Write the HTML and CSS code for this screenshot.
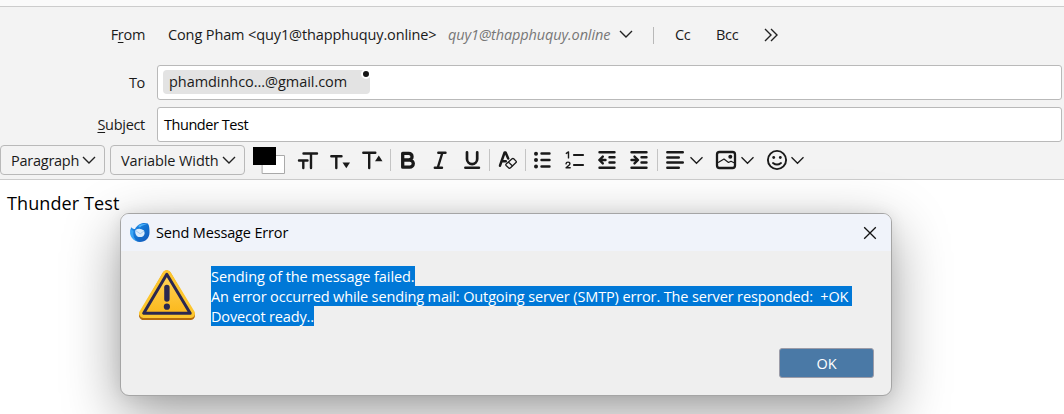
FILE: index.html
```
<!DOCTYPE html>
<html lang="en">
<head>
<meta charset="utf-8">
<title>Write: Thunder Test</title>
<link rel="stylesheet" href="styles.css">
</head>
<body>
<header class="headers">
  <div class="row from-row">
    <label class="label">F<u>r</u>om</label>
    <span class="identity">Cong Pham &lt;quy1@thapphuquy.online&gt;</span>
    <em class="account">quy1@thapphuquy.online</em>
    <svg class="chev" viewBox="0 0 14 9"><path d="M1 1l6 6 6-6"/></svg>
    <span class="divider"></span>
    <span class="cc">Cc</span>
    <span class="bcc">Bcc</span>
    <svg class="more" viewBox="0 0 14 14"><path d="M1 1l6 6-6 6M7 1l6 6-6 6"/></svg>
  </div>
  <div class="row to-row">
    <label class="label">To</label>
    <div class="field"><span class="pill"><span class="address">phamdinhco...@gmail.com</span><i class="dot"></i></span></div>
  </div>
  <div class="row subject-row">
    <label class="label"><u>S</u>ubject</label>
    <div class="field"><span class="subject">Thunder Test</span></div>
  </div>
</header>
<nav class="toolbar">
  <div class="select paragraph"><span>Paragraph</span><svg class="chev" viewBox="0 0 14 9"><path d="M1 1l6 6 6-6"/></svg></div>
  <div class="select width"><span>Variable Width</span><svg class="chev" viewBox="0 0 14 9"><path d="M1 1l6 6 6-6"/></svg></div>
  <svg class="icon" width="45" height="32" viewBox="250 144 45 32"><path d="M262.5 155.500h22v18h-22z" fill="#fff" stroke="#aaa" stroke-width="1"/><path d="M253 147h23v18h-23z" fill="#000" stroke="none"/></svg>
  <svg class="icon" width="30" height="32" viewBox="295 144 30 32"><path d="M303.500 153.500h13.500M311 153.500v14.500M299 160.500h8.500M303.300 160.500v7.500"/></svg>
  <svg class="icon" width="30" height="32" viewBox="325 144 30 32"><path d="M331.300 156.300h10.200M336.300 156.300v11.700"/><path class="solid" d="M342.500 162.500h7.500l-3.700 5.700z"/></svg>
  <svg class="icon" width="35" height="32" viewBox="355 144 35 32"><path d="M363.300 152.800h12M369.200 152.800v15.200"/><path class="solid" d="M375 161.200h7.500l-3.700-5.700z"/></svg>
  <svg class="icon" width="35" height="32" viewBox="390 144 35 32"><path class="sep" d="M390.500 149v22"/><path d="M402.700 153.300h6a3.300 3.300 0 0 1 0 6.700h-6zM402.700 160h7a3.600 3.600 0 0 1 0 7.200h-7z" stroke-width="3.300"/></svg>
  <svg class="icon" width="32" height="32" viewBox="425 144 32 32"><path d="M438.300 152.700h7.200M434.800 167.700h7.200M442.300 153l-4.500 14.500"/></svg>
  <svg class="icon" width="32" height="32" viewBox="457 144 32 32"><path d="M467 152.300v6.700a5.100 5.100 0 0 0 10.200 0v-6.700" stroke-width="2.700"/><path d="M465.300 167.700h13.700"/></svg>
  <svg class="icon" width="36" height="32" viewBox="489 144 36 32"><path class="sep" d="M489.500 149v22"/><path d="M500 165.700l4.600-13.200h1l2.600 6M501.800 161.200h4" stroke-width="2.500"/><path d="M506.100 164.100l6-5.300q.8-.7 1.600 0l2.300 2.300q.7.800 0 1.500l-5.700 5.300q-.7.700-1.500 0l-2.700-2.400q-.7-.7 0-1.400zM508.300 162l4.200 4" stroke-width="1.300"/></svg>
  <svg class="icon" width="33" height="32" viewBox="525 144 33 32"><path class="sep" d="M525.500 149v22"/><path d="M541.500 153.500h8M541.500 160h8M541.500 166.500h8"/><circle class="solid" cx="536" cy="153.800" r="2"/><circle class="solid" cx="536" cy="160.100" r="2"/><circle class="solid" cx="536" cy="166.400" r="2"/></svg>
  <svg class="icon" width="34" height="32" viewBox="558 144 34 32"><path d="M574 155h9M574 165h9" stroke-width="2.200"/><path d="M566.300 153.400l2.200-1.500v6M566 163.800q.2-1.700 2-1.700 1.900 0 1.900 1.600 0 1-1.500 2.100l-2.300 2h4.100" stroke-width="1.400"/></svg>
  <svg class="icon" width="32" height="32" viewBox="592 144 32 32"><path d="M599.500 152.300h15M599.500 167.800h15M609.500 157.300h5M609.500 162.500h5M600 160h5.500M602.800 156.600l-3.500 3.400 3.500 3.400"/></svg>
  <svg class="icon" width="33" height="32" viewBox="624 144 33 32"><path d="M631.500 152.300h15M631.500 167.800h15M641.500 157.300h5M641.500 162.500h5M631.500 160h5.500M634.500 156.600l3.500 3.400-3.500 3.400"/></svg>
  <svg class="icon" width="53" height="32" viewBox="657 144 53 32"><path class="sep" d="M657.500 149v22"/><path d="M667.300 152.300h15.500M667.300 157.500h11.500M667.300 162.500h15.500M667.300 167.700h11.500"/><path class="thin" d="M690.500 157.300l6 6 6-6"/></svg>
  <svg class="icon" width="50" height="32" viewBox="710 144 50 32"><rect x="717" y="152" width="18" height="16" rx="2.500" stroke-width="2.300"/><circle class="solid" cx="730.300" cy="156.700" r="2"/><path d="M717 162.500l2-.4 5-3.100 4.500 3.500 2.500-1.300 3.500 1.800" stroke-width="1.200"/><path class="thin" d="M741.500 157.300l6 6 6-6"/></svg>
  <svg class="icon" width="50" height="32" viewBox="760 144 50 32"><circle cx="777" cy="160" r="9.100" stroke-width="1.900"/><circle class="solid" cx="773.700" cy="157.500" r="1.400"/><circle class="solid" cx="780.300" cy="157.500" r="1.400"/><path d="M773 163q4 3.200 8 0" stroke-width="1.900"/><path class="thin" d="M791.500 157.300l6 6 6-6"/></svg>
</nav>
<main class="editor"><p class="body-text">Thunder Test</p></main>

<section class="dialog" role="dialog">
  <div class="titlebar">
    <svg class="logo" width="22" height="22" viewBox="0 0 22 22">
      <defs>
        <linearGradient id="bird" x1="0" y1="0" x2="1" y2="1"><stop offset="0" stop-color="#2a93ee"/><stop offset=".55" stop-color="#1170cf"/><stop offset="1" stop-color="#1456b8"/></linearGradient>
      </defs>
      <path d="M2 5q-1 6 1 10c2 3.600 5 5 8 5 5.500 0 9.500-4 9.500-9.500 0-3 0-7-1.700-9-2.500-.8-5.500-.9-8.300.8C8.300 3.800 7 5 6 7 4.500 7 3 6.500 2 5z" fill="url(#bird)"/>
      <path d="M1.500 7Q0 12 3 16q2 3 6 3.800Q3 16 4.500 9z" fill="#3aa5f5"/>
      <path d="M9 4q4-3 9-1.700Q13 3 11 5.600z" fill="#4fb5fa"/>
      <path d="M6.500 8Q10.500 5.500 15 8.400q1.500 3.400-.8 5.800-3.200 1.800-6.200 0-2.500-2.700-1.500-6.200z" fill="#dcecfb"/>
      <path d="M6.700 8.600l4.500 3.200 3.800-2.800" fill="none" stroke="#9cc4ec" stroke-width=".9"/>
    </svg>
    <span class="title">Send Message Error</span>
    <svg class="close" width="14" height="14" viewBox="0 0 14 14"><path d="M1.200 1.200l11.600 11.600M12.800 1.200L1.200 12.800"/></svg>
  </div>
  <div class="content">
    <svg class="warning" width="58" height="52" viewBox="138 269 58 52">
      <defs><linearGradient id="amber" x1="0" y1="0" x2="0" y2="1"><stop offset="0" stop-color="#ffd45a"/><stop offset="1" stop-color="#fbb81c"/></linearGradient></defs>
      <path d="M166.800 275L143.500 315.500H190.500z" fill="#b56a0c" stroke="#b56a0c" stroke-width="9" stroke-linejoin="round"/>
      <path d="M166.800 274.500L143.500 313.500H190.500z" fill="#fdc62e" stroke="#fdc62e" stroke-width="9" stroke-linejoin="round"/>
      <path d="M166.800 274.300L143.700 313.200H190.200z" fill="url(#amber)" stroke="#2b2850" stroke-width="3" stroke-linejoin="round"/>
      <path d="M166.900 287.500v11.500" stroke="#2b2850" stroke-width="5.400" stroke-linecap="round"/>
      <circle cx="166.900" cy="306.700" r="3.100" fill="#2b2850"/>
    </svg>
    <div class="message">
      <div><span class="sel line1">Sending of the message failed.</span></div>
      <div><span class="sel line2">An error occurred while sending mail: Outgoing server (SMTP) error. The server responded:&nbsp; +OK&nbsp;</span></div>
      <div><span class="sel line3">Dovecot ready..</span></div>
    </div>
  </div>
  <div class="actions"><button class="ok">OK</button></div>
</section>
</body>
</html>
```
FILE: styles.css
```
* { box-sizing: border-box; }
body {
  margin: 0;
  width: 1064px;
  height: 414px;
  overflow: hidden;
  position: relative;
  background: #fff;
  color: #1a1a1a;
  font: 14.5px/20px "Open Sans", "Noto Sans", sans-serif;
  letter-spacing: -0.3px;
  border-top: 6px solid #fafafa;
}
svg { display: block; flex: none; fill: none; }
u { text-decoration-thickness: 1px; text-underline-offset: 2px; }
.headers { height: 137px; padding-top: 14px; background: #f3f3f3; border-top: 1px solid #ccc; }
.row { display: flex; align-items: center; white-space: nowrap; }
.label { width: 145px; text-align: right; flex: none; }
.from-row { height: 28px; margin-bottom: 16px; }
.identity { margin-left: 23px; width: 280px; letter-spacing: -0.12px; }
.account { width: 171px; color: #777; letter-spacing: -0.12px; }
.chev { width: 14px; height: 9px; stroke: #222; stroke-width: 1.4; }
.from-row .chev { margin-bottom: 2px; }
.divider { width: 1px; height: 17px; margin: 0 21px 0 20px; background: #b8b8b8; }
.cc { width: 41px; }
.bcc { width: 48px; }
.more { width: 14px; height: 14px; stroke: #222; stroke-width: 1.4; }
.to-row { margin-bottom: 7px; }
.field {
  display: flex;
  align-items: center;
  width: 905px;
  height: 35px;
  margin-left: 12px;
  padding: 0 6px;
  background: #fff;
  border: 1px solid #b9b9b9;
  border-radius: 3px;
}
.pill {
  position: relative;
  width: 207px;
  height: 24px;
  padding: 2px 6px;
  margin-left: -1px;
  margin-bottom: 2px;
  border-radius: 4px;
  background: #e3e3e3;
  letter-spacing: -0.05px;
}
.dot {
  position: absolute;
  top: -1px;
  right: -1px;
  width: 10px;
  height: 10px;
  border: 2px solid #fff;
  border-radius: 50%;
  background: #151515;
}
.subject { color: #000; letter-spacing: -0.45px; }
.toolbar {
  display: flex;
  align-items: flex-start;
  height: 37px;
  background: #f3f3f3;
  border-bottom: 1px solid #ccc;
}
.select {
  display: flex;
  align-items: center;
  justify-content: space-between;
  height: 30px;
  margin-top: 2px;
  padding: 1px 8px 0 10px;
  border: 1px solid #b9b9b9;
  border-radius: 4px;
  white-space: nowrap;
}
.select .chev { margin-bottom: 1px; }
.paragraph { width: 105px; margin-right: 5px; letter-spacing: -0.25px; }
.width { width: 135px; margin-right: 5px; letter-spacing: -0.08px; }
.icon { margin-top: 1px; stroke: #1a1a1a; stroke-width: 2.4; stroke-linecap: round; stroke-linejoin: round; }
.icon .solid { fill: #1a1a1a; stroke: none; }
.icon .sep { stroke: #c4c4c4; stroke-width: 1; stroke-linecap: butt; }
.icon .thin { stroke-width: 1.3; stroke-linecap: butt; stroke-linejoin: miter; }
.editor { padding: 11px 7px; }
.body-text { margin: 0; font: 18px/24px "Open Sans", "Noto Sans", sans-serif; color: #000; letter-spacing: 0.1px; }
.dialog {
  position: absolute;
  left: 120px;
  top: 207px;
  width: 772px;
  height: 183px;
  border: 1px solid #a5a5a5;
  border-radius: 9px;
  background: #efefef;
  box-shadow: 0 18px 56px rgba(0, 0, 0, .38), 0 0 16px rgba(0, 0, 0, .08);
}
.titlebar {
  display: flex;
  align-items: center;
  height: 37px;
  padding: 0 14px 0 8px;
  border-radius: 8px 8px 0 0;
  background: #f0f3fa;
  color: #000;
}
.logo { margin-right: 5px; }
.title { letter-spacing: -0.16px; }
.close { margin-left: auto; stroke: #111; stroke-width: 1.3; }
.content { display: flex; padding: 15px 0 0 17px; height: 97px; }
.warning { margin-top: 3px; }
.message { margin-left: 15px; color: #fff; white-space: nowrap; }
.message div { height: 20px; }
.sel { display: inline-block; height: 20px; padding-top: 1px; background: #0078d7; }
.line1 { letter-spacing: -0.07px; }
.line2 { letter-spacing: -0.13px; }
.line3 { letter-spacing: -0.15px; }
.actions { display: flex; justify-content: flex-end; padding-right: 17px; }
.ok {
  width: 95px;
  height: 30px;
  padding: 1px 0 0;
  border: 1px solid #9c9ca8;
  border-radius: 3px;
  background: #4a79a6;
  color: #fff;
  font: inherit;
  letter-spacing: 0;
}
```
